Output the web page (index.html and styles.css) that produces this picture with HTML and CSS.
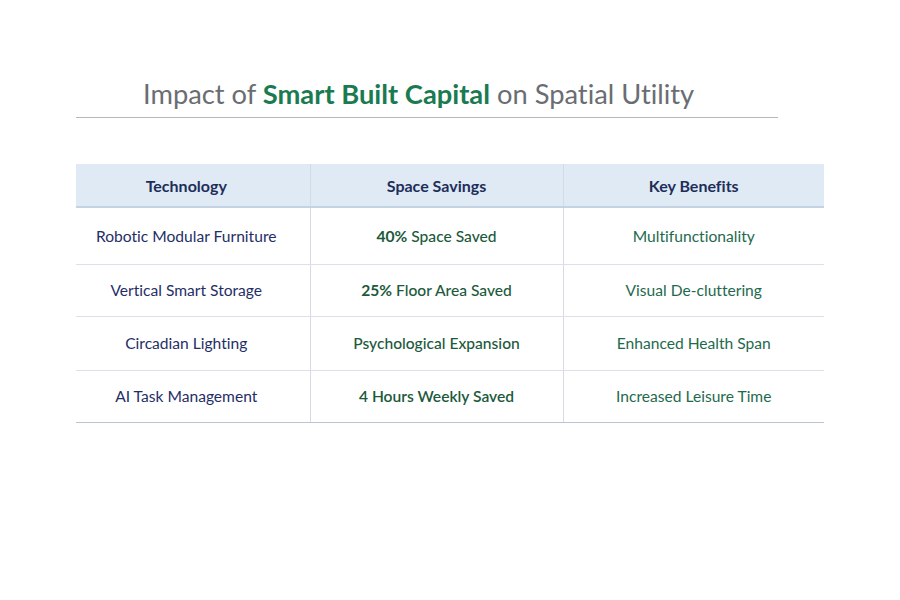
FILE: index.html
```html
<!DOCTYPE html>
<html>
<head>
<meta charset="utf-8">
<link rel="stylesheet" href="styles.css">
</head>
<body>
<div class="page">
  <div class="title-wrap">
    <h1 class="title">Impact of <span class="hl">Smart Built Capital</span> on Spatial Utility</h1>
  </div>
  <table class="grid">
    <thead>
      <tr><th class="c1">Technology</th><th class="c2">Space Savings</th><th class="c3">Key Benefits</th></tr>
    </thead>
    <tbody>
      <tr class="r1"><td class="tech">Robotic Modular Furniture</td><td class="save"><b>40%</b> Space Saved</td><td class="ben">Multifunctionality</td></tr>
      <tr class="r2"><td class="tech">Vertical Smart Storage</td><td class="save"><b>25%</b> Floor Area Saved</td><td class="ben">Visual De-cluttering</td></tr>
      <tr class="r3"><td class="tech">Circadian Lighting</td><td class="save">Psychological Expansion</td><td class="ben">Enhanced Health Span</td></tr>
      <tr class="r4"><td class="tech">AI Task Management</td><td class="save semi">4 Hours Weekly Saved</td><td class="ben">Increased Leisure Time</td></tr>
    </tbody>
  </table>
</div>
</body>
</html>
```
FILE: styles.css
```css
html, body { margin: 0; padding: 0; background: #fff; }
body { font-family: "Lato", "Open Sans", sans-serif; font-variant-ligatures: none; }
.page { width: 900px; height: 600px; padding-top: 76px; box-sizing: border-box; }
.title-wrap { margin-left: 76px; width: 702px; border-bottom: 1px solid #b4b7bb; height: 42px; box-sizing: border-box; }
.title { margin: 0; padding-left: 67px; font-size: 27.3px; font-weight: 400; color: #6a6d72; line-height: 36px; letter-spacing: 0; }
.title .hl { color: #1a7a50; font-weight: 700; }
.grid { margin-top: 46px; margin-left: 76px; width: 748px; border-collapse: collapse; table-layout: fixed; }
.grid th, .grid td { box-sizing: border-box; }
.grid th { background: #dfeaf4; color: #1e2d5a; font-size: 16px; font-weight: 700; height: 43px; padding: 0; border-bottom: 2px solid #c3d3e3; }
.c1 { width: 234px; }
.c2 { width: 253px; }
.c3 { width: 261px; }
.grid th + th, .grid td + td { border-left: 1px solid #d3dbe4; }
.grid td { text-align: center; font-size: 15.6px; padding: 0; border-bottom: 1px solid #dbe1e8; }
.grid th:first-child, .grid td:first-child { padding-right: 13px; }
.r1 td { height: 57px; }
.r2 td { height: 52px; }
.r3 td { height: 54px; }
.r4 td { height: 52px; border-bottom: 1px solid #b7c5d4; }
.tech { color: #1f2f66; }
.save { color: #1c5a3c; font-weight: 500; }
.save b { font-weight: 700; }
.semi { font-weight: 600; }
.ben { color: #1f6a4e; }
```
